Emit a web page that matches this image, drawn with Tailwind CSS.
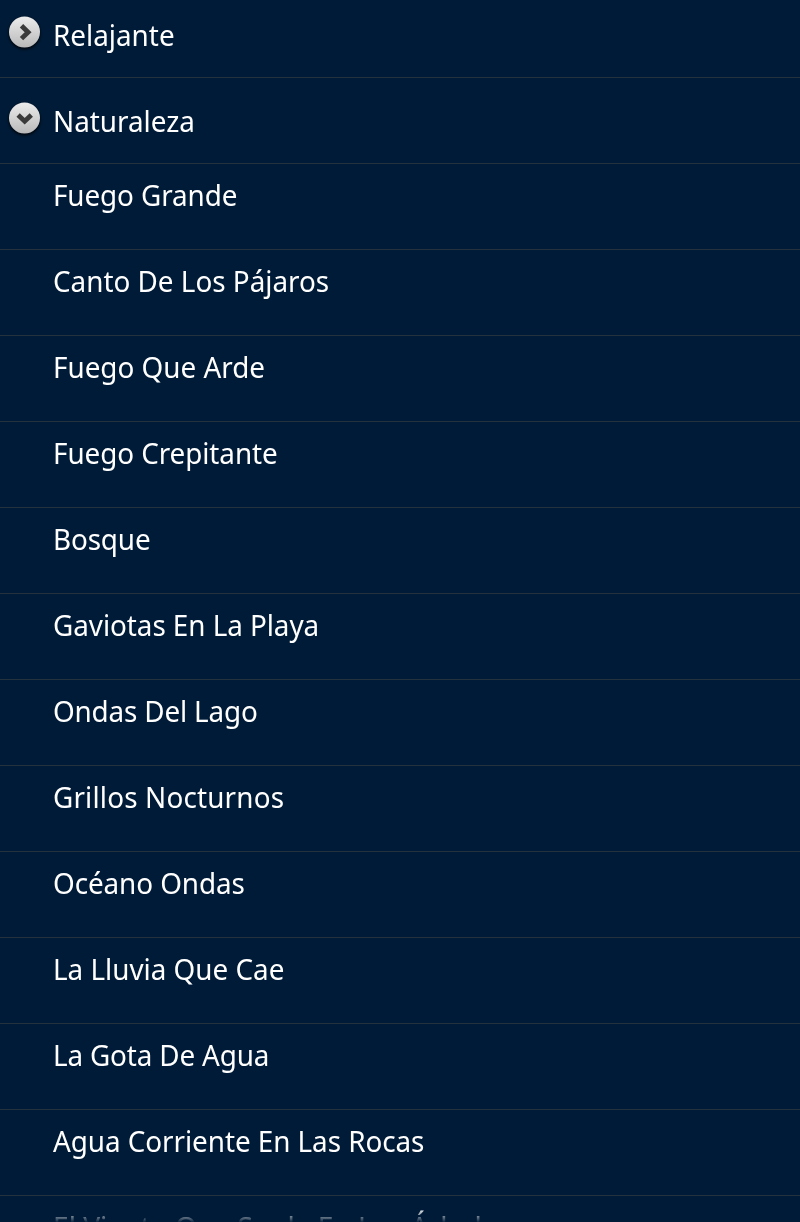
<!DOCTYPE html>
<html lang="es">
  <head>
    <meta charset="UTF-8" />
    <meta name="viewport" content="width=device-width, initial-scale=1.0" />
    <title>Sonidos</title>
    <script src="https://cdn.jsdelivr.net/npm/@tailwindcss/browser@4"></script>
  </head>
  <body class="bg-[#001b37] overflow-hidden">
    <div class="relative h-[1222px] overflow-hidden text-white text-[29px] leading-[38px] font-['Noto_Sans',sans-serif]">
      <!-- Groups -->
      <div class="flex h-[78px] pt-4 border-b border-[#23323c]">
        <svg class="w-[53px] h-12 -mt-2 shrink-0" viewBox="0 0 53 48">
          <defs>
            <linearGradient id="knob" x1="0" y1="0" x2="0" y2="1">
              <stop offset="0" stop-color="#ececec" />
              <stop offset="1" stop-color="#b9b9b9" />
            </linearGradient>
            <filter id="shade" x="-20%" y="-20%" width="140%" height="140%">
              <feGaussianBlur stdDeviation="1.2" />
            </filter>
          </defs>
          <circle cx="24.5" cy="25.5" r="16" fill="#000" opacity=".7" filter="url(#shade)" />
          <circle cx="24.5" cy="24" r="15.5" fill="url(#knob)" />
          <path d="M21.5 17.8l6.6 6.4-6.6 6.4" fill="none" stroke="#3a3a3a" stroke-width="4.8" />
        </svg>
        <span class="origin-left scale-x-96">Relajante</span>
      </div>
      <div class="flex h-[86px] pt-6 border-b border-[#23323c]">
        <svg class="w-[53px] h-12 -mt-2 shrink-0" viewBox="0 0 53 48">
          <circle cx="24.5" cy="25.5" r="16" fill="#000" opacity=".7" filter="url(#shade)" />
          <circle cx="24.5" cy="24" r="15.5" fill="url(#knob)" />
          <path d="M18.1 21l6.6 6.2 6.6-6.2" fill="none" stroke="#3a3a3a" stroke-width="4.8" />
        </svg>
        <span class="origin-left scale-x-96">Naturaleza</span>
      </div>

      <!-- Sounds -->
      <ul class="whitespace-nowrap">
        <li class="h-[86px] pt-3 pl-[53px] border-b border-[#23323c]"><span class="block origin-left scale-x-96 tracking-[-0.1px]">Fuego Grande</span></li>
        <li class="h-[86px] pt-3 pl-[53px] border-b border-[#23323c]"><span class="block origin-left scale-x-96">Canto De Los Pájaros</span></li>
        <li class="h-[86px] pt-3 pl-[53px] border-b border-[#23323c]"><span class="block origin-left scale-x-96">Fuego Que Arde</span></li>
        <li class="h-[86px] pt-3 pl-[53px] border-b border-[#23323c]"><span class="block origin-left scale-x-96 tracking-[-0.07px]">Fuego Crepitante</span></li>
        <li class="h-[86px] pt-3 pl-[53px] border-b border-[#23323c]"><span class="block origin-left scale-x-96 tracking-[-0.15px]">Bosque</span></li>
        <li class="h-[86px] pt-3 pl-[53px] border-b border-[#23323c]"><span class="block origin-left scale-x-96 tracking-[-0.05px]">Gaviotas En La Playa</span></li>
        <li class="h-[86px] pt-3 pl-[53px] border-b border-[#23323c]"><span class="block origin-left scale-x-96 tracking-[-0.17px]">Ondas Del Lago</span></li>
        <li class="h-[86px] pt-3 pl-[53px] border-b border-[#23323c]"><span class="block origin-left scale-x-96 tracking-[0.18px]">Grillos Nocturnos</span></li>
        <li class="h-[86px] pt-3 pl-[53px] border-b border-[#23323c]"><span class="block origin-left scale-x-96 tracking-[-0.08px]">Océano Ondas</span></li>
        <li class="h-[86px] pt-3 pl-[53px] border-b border-[#23323c]"><span class="block origin-left scale-x-96">La Lluvia Que Cae</span></li>
        <li class="h-[86px] pt-3 pl-[53px] border-b border-[#23323c]"><span class="block origin-left scale-x-96 tracking-[-0.16px]">La Gota De Agua</span></li>
        <li class="h-[86px] pt-3 pl-[53px] border-b border-[#23323c]"><span class="block origin-left scale-x-96 tracking-[-0.05px]">Agua Corriente En Las Rocas</span></li>
        <li class="h-[86px] pt-3 pl-[53px]"><span class="block origin-left scale-x-97">El Viento Que Sopla En Los Árboles</span></li>
      </ul>

      <!-- Bottom fading edge -->
      <div class="absolute inset-x-0 bottom-0 h-3 bg-linear-to-b from-[#001b37]/10 to-[#001b37]/95"></div>
    </div>
  </body>
</html>
